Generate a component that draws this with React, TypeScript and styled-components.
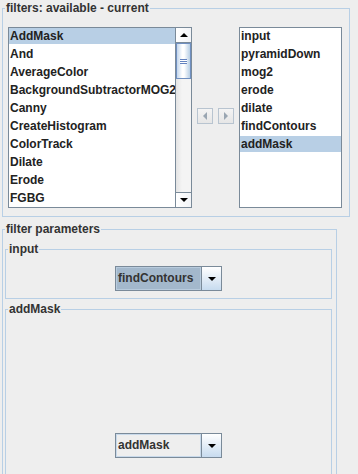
import React from 'react';
import styled, { createGlobalStyle } from 'styled-components';

const GlobalStyle = createGlobalStyle`
  html, body {
    margin: 0;
    padding: 0;
    background: #eeeeee;
  }
  body {
    font-family: "Liberation Sans", Arial, sans-serif;
    font-size: 12px;
    font-weight: bold;
    color: #333333;
  }
`;

const available = [
  'AddMask',
  'And',
  'AverageColor',
  'BackgroundSubtractorMOG2',
  'Canny',
  'CreateHistogram',
  'ColorTrack',
  'Dilate',
  'Erode',
  'FGBG',
];

const current = ['input', 'pyramidDown', 'mog2', 'erode', 'dilate', 'findContours', 'addMask'];

const Triangle = ({ dir, color = '#000' }: { dir: 'up' | 'down' | 'left' | 'right'; color?: string }) => {
  const pts = {
    up: '0,4 4,0 8,4',
    down: '0,0 8,0 4,4',
    left: '4,0 4,8 0,4',
    right: '0,0 0,8 4,4',
  }[dir];
  const vertical = dir === 'up' || dir === 'down';
  return (
    <svg width={vertical ? 8 : 4} height={vertical ? 4 : 8} viewBox={vertical ? '0 0 8 4' : '0 0 4 8'}>
      <polygon points={pts} fill={color} />
    </svg>
  );
};

export default function App() {
  return (
    <>
      <GlobalStyle />
      <Page>
        <Group $width={348}>
          <Title>filters: available - current</Title>
          <FilterRow>
            <ScrollPane>
              <List>
                {available.map((name, i) => (
                  <Row key={name} $selected={i === 0}>
                    {name}
                  </Row>
                ))}
              </List>
              <ScrollBar>
                <ArrowButton>
                  <Triangle dir="up" />
                </ArrowButton>
                <Track>
                  <Thumb>
                    <Grip />
                  </Thumb>
                </Track>
                <ArrowButton $bottom>
                  <Triangle dir="down" />
                </ArrowButton>
              </ScrollBar>
            </ScrollPane>
            <MoveButtons>
              <MoveButton>
                <Triangle dir="left" color="#9aa6b2" />
              </MoveButton>
              <MoveButton>
                <Triangle dir="right" color="#9aa6b2" />
              </MoveButton>
            </MoveButtons>
            <CurrentList>
              {current.map((name, i) => (
                <Row key={name} $selected={i === current.length - 1}>
                  {name}
                </Row>
              ))}
            </CurrentList>
          </FilterRow>
        </Group>

        <ParamsGroup $width={335}>
          <Title>filter parameters</Title>
          <ParamsBody>
            <Group $width={327}>
              <Title>input</Title>
              <ComboHolder $top={10} $bottom={7}>
                <Combo>
                  <ComboValue $selected>findContours</ComboValue>
                  <ComboButton>
                    <Triangle dir="down" />
                  </ComboButton>
                </Combo>
              </ComboHolder>
            </Group>
            <MaskGroup $width={327}>
              <Title>addMask</Title>
              <ComboHolder $top={117} $bottom={30}>
                <Combo>
                  <ComboValue>addMask</ComboValue>
                  <ComboButton>
                    <Triangle dir="down" />
                  </ComboButton>
                </Combo>
              </ComboHolder>
            </MaskGroup>
          </ParamsBody>
        </ParamsGroup>
      </Page>
    </>
  );
}

const Page = styled.div`
  width: 358px;
  height: 474px;
  overflow: hidden;
  box-sizing: border-box;
  padding: 1px 0 0 2px;
  display: flex;
  flex-direction: column;
  align-items: flex-start;
`;

const Group = styled.fieldset<{ $width: number }>`
  box-sizing: border-box;
  width: ${({ $width }) => $width}px;
  min-width: 0;
  margin: 0;
  padding: 0;
  border: 1px solid #b8cfe5;
`;

const ParamsGroup = styled(Group)`
  margin-top: 5px;
`;

const MaskGroup = styled(Group)`
  margin-top: 3px;
`;

const Title = styled.legend`
  margin-left: 2px;
  padding: 0 1px;
  height: 14px;
  line-height: 14px;
  font-size: 12px;
  font-weight: bold;
  color: #333333;
`;

const FilterRow = styled.div`
  display: flex;
  align-items: center;
  padding: 12px 7px 8px 5px;
`;

const ScrollPane = styled.div`
  box-sizing: border-box;
  width: 184px;
  height: 181px;
  border: 1px solid #7a8a99;
  background: #ffffff;
  display: flex;
`;

const List = styled.div`
  flex: 1;
  overflow: hidden;
  padding-left: 0;
`;

const Row = styled.div<{ $selected?: boolean }>`
  height: 16px;
  line-height: 16px;
  margin-bottom: 2px;
  padding-left: 1px;
  white-space: nowrap;
  color: #222222;
  background: ${({ $selected }) => ($selected ? '#b8cfe5' : 'transparent')};
`;

const ScrollBar = styled.div`
  width: 15px;
  border-left: 1px solid #7a8a99;
  display: flex;
  flex-direction: column;
  background: #eeeeee;
`;

const ArrowButton = styled.div<{ $bottom?: boolean }>`
  height: 14px;
  display: flex;
  align-items: center;
  justify-content: center;
  background: linear-gradient(to right, #ffffff, #f2f4f7);
  border-top: ${({ $bottom }) => ($bottom ? '1px solid #7a8a99' : 'none')};
  border-bottom: ${({ $bottom }) => ($bottom ? 'none' : '1px solid #7a8a99')};
`;

const Track = styled.div`
  flex: 1;
  background: linear-gradient(to right, #e4e4e4, #f4f4f4 40%, #f4f4f4);
`;

const Thumb = styled.div`
  box-sizing: border-box;
  height: 36px;
  border: 1px solid #6f8fc0;
  background: linear-gradient(to right, #c3d6ec, #ffffff 40%, #ffffff 55%, #b8cfe5);
  display: flex;
  align-items: center;
  justify-content: center;
`;

const Grip = styled.div`
  width: 7px;
  height: 5px;
  background: repeating-linear-gradient(#6382bf 0 1px, #ffffff 1px 2px);
`;

const MoveButtons = styled.div`
  display: flex;
  gap: 5px;
  margin: -3px 5px 0;
`;

const MoveButton = styled.div`
  box-sizing: border-box;
  width: 16px;
  height: 16px;
  border: 1px solid #b8c4d0;
  background: linear-gradient(#f4f4f4, #e6e6e6);
  display: flex;
  align-items: center;
  justify-content: center;
`;

const CurrentList = styled.div`
  box-sizing: border-box;
  width: 103px;
  height: 181px;
  border: 1px solid #7a8a99;
  background: #ffffff;
  overflow: hidden;
`;

const ParamsBody = styled.div`
  padding: 6px 4px 0 2px;
`;

const ComboHolder = styled.div<{ $top: number; $bottom: number }>`
  display: flex;
  justify-content: center;
  padding-top: ${({ $top }) => $top}px;
  padding-bottom: ${({ $bottom }) => $bottom}px;
`;

const Combo = styled.div`
  box-sizing: border-box;
  width: 107px;
  height: 25px;
  border: 1px solid #7a8a99;
  background: #eeeeee;
  display: flex;
`;

const ComboValue = styled.div<{ $selected?: boolean }>`
  flex: 1;
  box-sizing: border-box;
  border: 1px solid ${({ $selected }) => ($selected ? '#b8cbdd' : '#c8d9ea')};
  background: ${({ $selected }) => ($selected ? '#a3b8cc' : '#eeeeee')};
  padding-left: 1px;
  line-height: 21px;
  color: #333333;
  white-space: nowrap;
  overflow: hidden;
`;

const ComboButton = styled.div`
  width: 19px;
  border-left: 1px solid #7a8a99;
  background: linear-gradient(#ffffff, #c7dbef);
  display: flex;
  align-items: center;
  justify-content: center;
`;
